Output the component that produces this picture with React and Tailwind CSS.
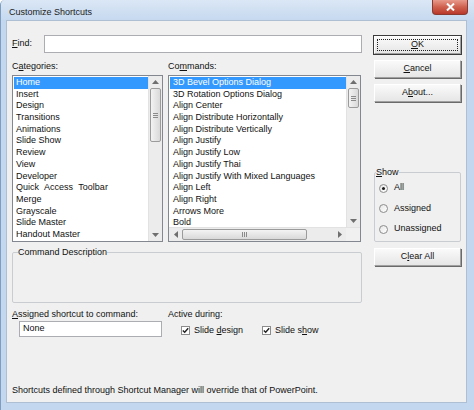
import React from "react";

const cats = ["Home","Insert","Design","Transitions","Animations","Slide Show","Review","View","Developer","Quick Access Toolbar","Merge","Grayscale","Slide Master","Handout Master","Notes Master"];
const cmds = ["3D Bevel Options Dialog","3D Rotation Options Dialog","Align Center","Align Distribute Horizontally","Align Distribute Vertically","Align Justify","Align Justify Low","Align Justify Thai","Align Justify With Mixed Languages","Align Left","Align Right","Arrows More","Bold"];

function Up() {
  return <svg width="7" height="4" viewBox="0 0 7 4"><path d="M0 4L3.5 0L7 4Z" fill="#6f6f6f" /></svg>;
}
function Down() {
  return <svg width="7" height="4" viewBox="0 0 7 4"><path d="M0 0L3.5 4L7 0Z" fill="#6f6f6f" /></svg>;
}
function Left() {
  return <svg width="4" height="7" viewBox="0 0 4 7"><path d="M4 0L0 3.5L4 7Z" fill="#6f6f6f" /></svg>;
}
function Right() {
  return <svg width="4" height="7" viewBox="0 0 4 7"><path d="M0 0L4 3.5L0 7Z" fill="#6f6f6f" /></svg>;
}

function VScroll({ top, h }) {
  return (
    <div className="w-[14px] h-full flex flex-col bg-[#ececec] border-l border-[#e2e2e2]">
      <div className="h-[12px] flex items-center justify-center"><Up /></div>
      <div style={{ height: top }} />
      <div style={{ height: h }} className="mx-[1px] rounded-[2px] border border-[#9b9b9b] bg-gradient-to-r from-[#f3f3f3] to-[#d9d9d9] flex flex-col items-center justify-center gap-[1px]">
        <div className="w-[5px] h-px bg-[#8a8a8a]" />
        <div className="w-[5px] h-px bg-[#8a8a8a]" />
        <div className="w-[5px] h-px bg-[#8a8a8a]" />
      </div>
      <div className="flex-1" />
      <div className="h-[12px] flex items-center justify-center"><Down /></div>
    </div>
  );
}

function Btn({ children, def, className = "" }) {
  return (
    <div className={`h-[18px] w-[87px] flex items-center justify-center bg-gradient-to-b from-[#fafafa] to-[#e6e6e6] border-t border-l border-[#ffffff] border-b border-r border-b-[#a0a0a0] border-r-[#a0a0a0] shadow-[1px_1px_0_#6a6a6a] ${def ? "outline outline-1 outline-[#3c3c3c]" : ""} ${className}`}>
      {def ? (
        <div className="w-[81px] h-[12px] border border-dotted border-[#222] flex items-center justify-center">{children}</div>
      ) : children}
    </div>
  );
}

function Radio({ checked, label }) {
  return (
    <div className="flex items-center h-[10px]">
      <div className="w-[9px] h-[9px] rounded-full border border-[#8c8c8c] bg-gradient-to-br from-[#e6e6e6] to-white flex items-center justify-center">
        {checked && <div className="w-[3px] h-[3px] rounded-full bg-[#1d1d1d]" />}
      </div>
      <span className="ml-[6px]">{label}</span>
    </div>
  );
}

function Check({ label }) {
  return (
    <div className="flex items-center">
      <div className="w-[9px] h-[9px] border border-[#8c8c8c] bg-white flex items-center justify-center">
        <svg width="7" height="7" viewBox="0 0 7 7"><path d="M0.8 3.4L2.7 5.3L6.2 1.2" stroke="#222" strokeWidth="1.4" fill="none" /></svg>
      </div>
      <span className="ml-[4px]">{label}</span>
    </div>
  );
}

export default function App() {
  return (
    <div className="w-[474px] h-[410px] bg-[#c3d7ee] font-['Liberation_Sans',Arial,sans-serif] text-[9px] text-[#111] flex flex-col overflow-hidden border-l border-[#7f9dc0] rounded-tl-[5px]">
      {/* title bar */}
      <div className="h-[20px] flex items-start bg-gradient-to-b from-[#dbe7f5] to-[#c6d9ef]">
        <div className="ml-[8px] mt-[6px] leading-[12px] text-[#1b1b1b]">Customize Shortcuts</div>
        <div className="flex-1" />
        <div className="mr-[6px] w-[36px] h-[15px] rounded-b-[4px] border border-t-0 border-[#8a3a30] bg-gradient-to-b from-[#e79a8c] via-[#d0614f] to-[#b8372a] flex items-center justify-center">
          <svg width="9" height="8" viewBox="0 0 9 8"><path d="M1 0.5L8 7.5M8 0.5L1 7.5" stroke="#fff" strokeWidth="2" /></svg>
        </div>
      </div>
      {/* client */}
      <div className="ml-[5px] w-[461px] h-[383px] bg-[#f0f0f0] border border-[#aebfd4] flex flex-col">
        <div className="flex">
          {/* left column */}
          <div className="ml-[5px] w-[350px] flex flex-col">
            <div className="mt-[14px] flex items-center h-[18px]">
              <span className="w-[32px]"><span className="underline">F</span>ind:</span>
              <div className="flex-1 h-[18px] bg-white border border-[#abadb3]" />
            </div>
            <div className="mt-[8px] flex leading-[10px]">
              <span className="w-[156px]">C<span className="underline">a</span>tegories:</span>
              <span>Co<span className="underline">m</span>mands:</span>
            </div>
            <div className="mt-[4px] flex h-[167px]">
              {/* categories */}
              <div className="w-[151px] h-full border border-[#828790] bg-white flex">
                <div className="flex-1 overflow-hidden flex flex-col pl-px pt-px">
                  {cats.map((c, i) => (
                    <div key={c} className={`h-[11.7px] leading-[11.7px] pl-[2px] shrink-0 whitespace-nowrap ${i === 0 ? "bg-[#3399ff] text-white" : ""} ${c === "Quick Access Toolbar" ? "[word-spacing:3px]" : ""}`}>{c}</div>
                  ))}
                </div>
                <VScroll top={0} h={54} />
              </div>
              {/* commands */}
              <div className="ml-[5px] w-[193px] h-full border border-[#828790] bg-white flex flex-col">
                <div className="flex-1 flex min-h-0">
                  <div className="flex-1 overflow-hidden flex flex-col pl-px pt-px">
                    {cmds.map((c, i) => (
                      <div key={c} className={`h-[11.7px] leading-[11.7px] pl-[3px] shrink-0 whitespace-nowrap ${i === 0 ? "bg-[#3399ff] text-white" : ""}`}>{c}</div>
                    ))}
                  </div>
                  <VScroll top={0} h={20} />
                </div>
                <div className="h-[14px] flex bg-[#ececec] border-t border-[#e2e2e2]">
                  <div className="w-[13px] flex items-center justify-center"><Left /></div>
                  <div className="w-[125px] my-[1px] rounded-[2px] border border-[#9b9b9b] bg-gradient-to-b from-[#f3f3f3] to-[#d9d9d9] flex items-center justify-center gap-[1px]">
                    <div className="w-px h-[5px] bg-[#8a8a8a]" />
                    <div className="w-px h-[5px] bg-[#8a8a8a]" />
                    <div className="w-px h-[5px] bg-[#8a8a8a]" />
                  </div>
                  <div className="flex-1" />
                  <div className="w-[13px] flex items-center justify-center"><Right /></div>
                  <div className="w-[14px] bg-[#f0f0f0]" />
                </div>
              </div>
            </div>
            <fieldset className="mt-[5px] h-[56px] border border-[#c9cdd1] rounded-[2px]">
              <legend className="ml-[5px] leading-[10px]">Command Description</legend>
            </fieldset>
            <div className="mt-[6px] flex">
              <div className="w-[156px] flex flex-col">
                <span className="leading-[10px]"><span className="underline">A</span>ssigned shortcut to command:</span>
                <div className="mt-[2px] ml-[7px] w-[143px] h-[16px] bg-white border border-[#abadb3] flex items-center pl-[3px]">None</div>
              </div>
              <div className="flex flex-col">
                <span className="leading-[10px]">Active during:</span>
                <div className="mt-[5px] ml-[13px] flex">
                  <div className="w-[81px]"><Check label={<>Slide <span className="underline">d</span>esign</>} /></div>
                  <Check label={<>Slide s<span className="underline">h</span>ow</>} />
                </div>
              </div>
            </div>
            <div className="mt-[47px] leading-[10px]">Shortcuts defined through Shortcut Manager will override that of PowerPoint.</div>
          </div>
          {/* right column */}
          <div className="ml-[12px] w-[87px] flex flex-col">
            <Btn def className="mt-[15px]"><span className="underline">O</span>K</Btn>
            <Btn className="mt-[6px]"><span className="underline">C</span>ancel</Btn>
            <Btn className="mt-[6px]">A<span className="underline">b</span>out...</Btn>
            <fieldset className="mt-[65px] h-[75px] border border-[#c9cdd1] rounded-[2px] flex flex-col">
              <legend className="ml-[1px] leading-[10px]"><span className="underline">S</span>how</legend>
              <div className="ml-[4px] mt-[6px] flex flex-col gap-[10.5px]">
                <Radio checked label="All" />
                <Radio label="Assigned" />
                <Radio label="Unassigned" />
              </div>
            </fieldset>
            <Btn className="mt-[6px]">C<span className="underline">l</span>ear All</Btn>
          </div>
        </div>
      </div>
    </div>
  );
}
